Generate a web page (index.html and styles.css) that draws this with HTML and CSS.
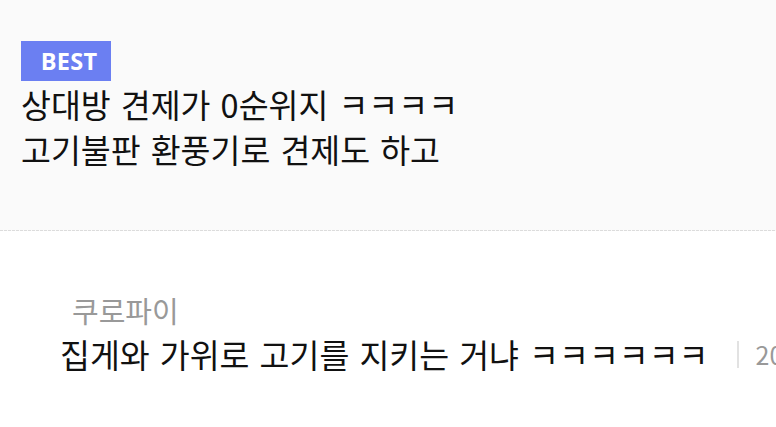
FILE: index.html
```html
<!DOCTYPE html>
<html lang="ko">
<head>
<meta charset="utf-8">
<link rel="stylesheet" href="styles.css">
</head>
<body>
<div class="page">
  <section class="best">
    <span class="badge">BEST</span>
    <h1 class="title">상대방 견제가 0순위지 ㅋㅋㅋㅋ<br>고기불판 환풍기로 견제도 하고</h1>
  </section>
  <section class="comment">
    <div class="nick">쿠로파이</div>
    <div class="row">
      <span class="text">집게와 가위로 고기를 지키는 거냐 ㅋㅋㅋㅋㅋㅋ</span>
      <span class="sep"></span>
      <span class="date">2023.05.12</span>
    </div>
  </section>
</div>
</body>
</html>
```
FILE: styles.css
```css
html, body {
  margin: 0;
  padding: 0;
  background: #fff;
}
.page {
  width: 776px;
  height: 427px;
  overflow: hidden;
  font-family: "Noto Sans CJK KR", "Noto Sans", sans-serif;
}
.best {
  background-color: #fafafa;
  background-image: repeating-linear-gradient(to right, #dcdcdc 0 3px, transparent 3px 4px);
  background-size: 100% 1px;
  background-position: left bottom;
  background-repeat: no-repeat;
  height: 231px;
  box-sizing: border-box;
  padding: 41px 0 0 21px;
}
.badge {
  display: flex;
  align-items: center;
  justify-content: center;
  width: 90px;
  height: 40px;
  background: #6b7ff2;
  color: #fff;
  font-family: "Open Sans", sans-serif;
  font-weight: 700;
  font-size: 23.5px;
  letter-spacing: 0.3px;
  box-sizing: border-box;
  padding-left: 6px;
}
.title {
  margin: 0;
  font-weight: 400;
  font-size: 32.5px;
  line-height: 45px;
  word-spacing: 1px;
  color: #111;
}
.comment {
  padding: 59px 0 0 60px;
}
.nick {
  padding-left: 12px;
  font-size: 29px;
  line-height: 40px;
  color: #999;
  word-spacing: 4px;
}
.row {
  display: flex;
  align-items: center;
  white-space: nowrap;
  margin-top: 4px;
}
.text {
  font-size: 32.5px;
  line-height: 40px;
  color: #111;
  word-spacing: 1px;
}
.sep {
  width: 2px;
  height: 27px;
  background: #e2e2e2;
  margin: 0 17px 0 28px;
  flex: none;
}
.date {
  font-size: 25px;
  color: #999;
}
```
